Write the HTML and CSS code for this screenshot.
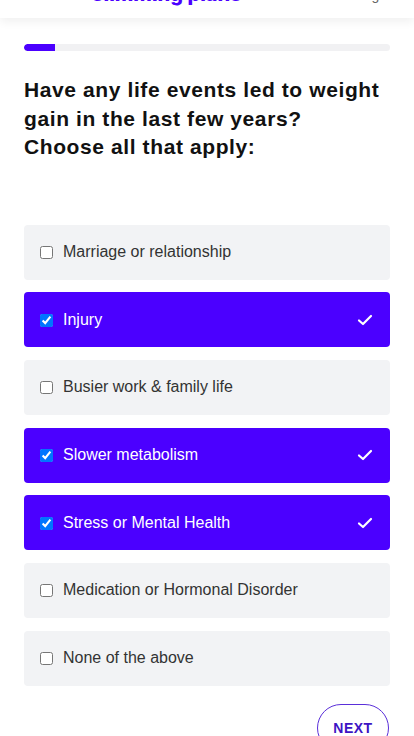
FILE: index.html
```html
<!DOCTYPE html>
<html lang="en">
<head>
<meta charset="utf-8">
<link rel="stylesheet" href="styles.css">
</head>
<body>
<header class="topbar">
  <div class="logo">slimming plans</div>
  <div class="step">Log in</div>
</header>
<main class="page">
  <div class="progress"><div class="progress-fill" style="width:31px"></div></div>
  <h1 class="question">Have any life events led to weight gain in the last few years?<br>Choose all that apply:</h1>
  <ul class="options">
    <li class="option"><input type="checkbox" class="box"><span class="label">Marriage or relationship</span></li>
    <li class="option selected"><input type="checkbox" class="box" checked><span class="label">Injury</span><svg class="tick" viewBox="0 0 16 12" width="16" height="12"><path d="M2 6.5 L6 10 L14 2" fill="none" stroke="#fff" stroke-width="2.2" stroke-linecap="round" stroke-linejoin="round"/></svg></li>
    <li class="option"><input type="checkbox" class="box"><span class="label">Busier work &amp; family life</span></li>
    <li class="option selected"><input type="checkbox" class="box" checked><span class="label">Slower metabolism</span><svg class="tick" viewBox="0 0 16 12" width="16" height="12"><path d="M2 6.5 L6 10 L14 2" fill="none" stroke="#fff" stroke-width="2.2" stroke-linecap="round" stroke-linejoin="round"/></svg></li>
    <li class="option selected"><input type="checkbox" class="box" checked><span class="label">Stress or Mental Health</span><svg class="tick" viewBox="0 0 16 12" width="16" height="12"><path d="M2 6.5 L6 10 L14 2" fill="none" stroke="#fff" stroke-width="2.2" stroke-linecap="round" stroke-linejoin="round"/></svg></li>
    <li class="option"><input type="checkbox" class="box"><span class="label">Medication or Hormonal Disorder</span></li>
    <li class="option"><input type="checkbox" class="box"><span class="label">None of the above</span></li>
  </ul>
  <div class="actions"><button class="next">NEXT</button></div>
</main>
</body>
</html>
```
FILE: styles.css
```css
* { box-sizing: border-box; }
html, body { margin: 0; padding: 0; background: #fff; }
body { font-family: "Liberation Sans", Arial, sans-serif; color: #111; overflow: hidden; }

.topbar {
  height: 18px;
  overflow: hidden;
  display: flex;
  justify-content: space-between;
  align-items: flex-end;
  padding: 0 20px 0 0;
  box-shadow: 0 4px 10px rgba(0,0,0,0.06);
}
.logo {
  font-family: Inter, "Noto Sans", sans-serif;
  font-weight: 800;
  font-size: 20px;
  line-height: 20px;
  color: #4b00ff;
  margin-bottom: 14px;
  margin-left: 92px;
  white-space: nowrap;
}
.step {
  font-size: 14px;
  color: #666;
  line-height: 14px;
  margin-bottom: 16px;
}

.page { padding: 0 24px; }

.progress {
  margin-top: 26px;
  height: 7px;
  border-radius: 4px;
  background: #f1f1f3;
  overflow: hidden;
}
.progress-fill { height: 100%; background: #4b00ff; border-radius: 4px 0 0 4px; }

.question {
  margin: 25px 0 0;
  font-size: 21px;
  line-height: 28.5px;
  font-weight: 700;
  letter-spacing: 0.6px;
  color: #111;
}

.options {
  list-style: none;
  margin: 63px 0 0;
  padding: 0;
  display: flex;
  flex-direction: column;
  gap: 12.7px;
}
.option {
  height: 55px;
  border-radius: 4px;
  background: #f2f3f5;
  display: flex;
  align-items: center;
  padding: 0 17px 0 16px;
  font-size: 16px;
  color: #333;
}
.option.selected { background: #4b00ff; color: #fff; }
.box { margin: 1px 10px 0 0; width: 13px; height: 13px; flex: none; }
.label { flex: 1; }
.tick { flex: none; }

.actions { display: flex; justify-content: flex-end; margin-top: 18px; }
.next {
  width: 72px;
  height: 48px;
  border: 1px solid #5a2fd9;
  border-radius: 24px;
  background: #fff;
  color: #3d14c4;
  font-family: "Liberation Sans", Arial, sans-serif;
  font-weight: 700;
  font-size: 14px;
  letter-spacing: 0.5px;
  padding: 0;
  margin-right: 1px;
}
```
